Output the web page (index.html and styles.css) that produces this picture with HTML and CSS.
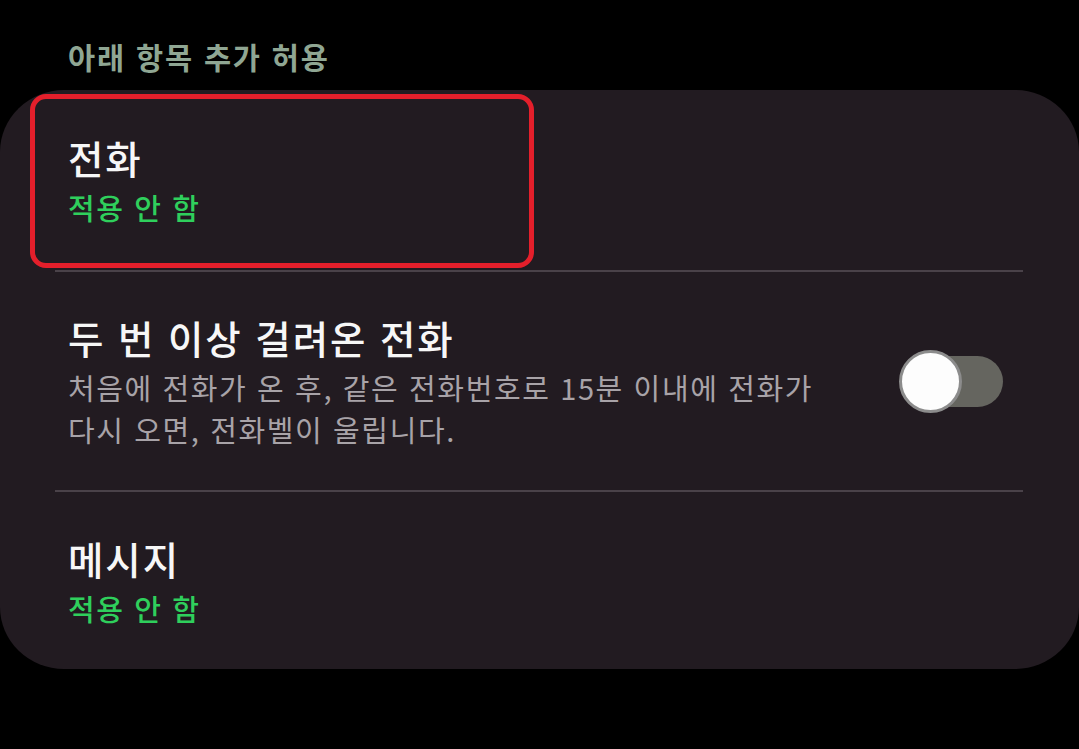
FILE: index.html
```html
<!DOCTYPE html>
<html lang="ko">
<head>
<meta charset="utf-8">
<link rel="stylesheet" href="styles.css">
</head>
<body>
<div class="screen">
  <div class="section-header">아래 항목 추가 허용</div>
  <div class="card">
    <div class="row row-call">
      <div class="text">
        <div class="title">전화</div>
        <div class="status">적용 안 함</div>
      </div>
      <div class="highlight"></div>
    </div>
    <div class="divider"></div>
    <div class="row row-repeat">
      <div class="text">
        <div class="title">두 번 이상 걸려온 전화</div>
        <div class="desc">처음에 전화가 온 후, 같은 전화번호로 15분 이내에 전화가<br>다시 오면, 전화벨이 울립니다.</div>
      </div>
      <div class="toggle">
        <div class="track"></div>
        <div class="thumb"></div>
      </div>
    </div>
    <div class="divider"></div>
    <div class="row row-msg">
      <div class="text">
        <div class="title">메시지</div>
        <div class="status">적용 안 함</div>
      </div>
    </div>
  </div>
</div>
</body>
</html>
```

FILE: styles.css
```css
html, body {
  margin: 0;
  padding: 0;
  background: #000;
}
body {
  width: 1079px;
  height: 749px;
  overflow: hidden;
  font-family: "Noto Sans CJK KR", "Noto Sans", sans-serif;
}
.screen {
  display: flex;
  flex-direction: column;
}
.section-header {
  padding: 35px 0 0 68px;
  height: 90px;
  box-sizing: border-box;
  font-size: 29.5px;
  line-height: 42px;
  font-weight: 700;
  letter-spacing: 1.8px;
  color: #8fa693;
}
.card {
  background: #221b21;
  border-radius: 64px / 62px;
  height: 579px;
  display: flex;
  flex-direction: column;
}
.row {
  position: relative;
  display: flex;
  align-items: center;
  padding: 0 76px 0 68px;
}
.row-call { height: 180px; }
.row-repeat { height: 218px; }
.row-msg { height: 177px; }
.text {
  flex: 1;
  display: flex;
  flex-direction: column;
}
.title {
  font-size: 38.5px;
  line-height: 50px;
  font-weight: 500;
  letter-spacing: 1.9px;
  color: #f7f7f7;
}
.status {
  font-size: 29px;
  line-height: 42px;
  margin-top: 4px;
  font-weight: 500;
  letter-spacing: 1.6px;
  color: #2fcf5c;
}
.desc {
  font-size: 29px;
  line-height: 42px;
  margin-top: 4px;
  letter-spacing: 1.6px;
  color: #a8a3a8;
}
.divider {
  height: 2px;
  background: #4a4249;
  margin: 0 56px 0 55px;
}
.highlight {
  position: absolute;
  left: 30px;
  top: 4px;
  width: 504px;
  height: 174px;
  box-sizing: border-box;
  border: 5px solid #e41f2b;
  border-radius: 16px;
}
.toggle {
  position: relative;
  width: 104px;
  height: 63px;
}
.track {
  position: absolute;
  left: 6px;
  right: 0;
  top: 6px;
  height: 51px;
  border-radius: 26px;
  background: #65655f;
}
.thumb {
  position: absolute;
  left: 0;
  top: 0;
  width: 63px;
  height: 63px;
  box-sizing: border-box;
  border-radius: 50%;
  background: #fdfdfd;
  border: 3px solid #8c8c8c;
}
```
